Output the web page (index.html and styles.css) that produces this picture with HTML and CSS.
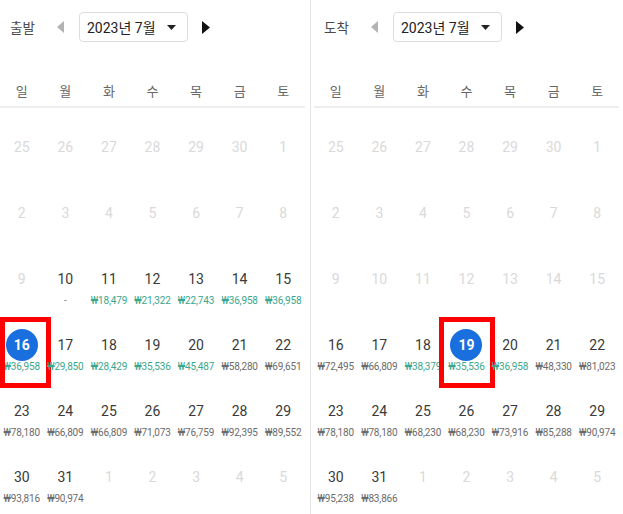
FILE: index.html
```html
<!DOCTYPE html>
<html lang="ko">
<head>
<meta charset="utf-8">
<title>달력</title>
<link rel="stylesheet" href="styles.css">
</head>
<body>
<div class="page">
  <section class="panel">
    <div class="head">
      <span class="label">출발</span>
      <div class="nav prev"><svg width="7" height="12" viewBox="0 0 7 12"><path d="M7 0 L0 6 L7 12 Z" fill="#b3b3b3"/></svg></div>
      <div class="select"><span>2023년 7월</span><svg width="9" height="5" viewBox="0 0 9 5"><path d="M0 0 H9 L4.5 5 Z" fill="#222"/></svg></div>
      <div class="nav next"><svg width="8" height="13" viewBox="0 0 8 13"><path d="M0 0 L8 6.5 L0 13 Z" fill="#111"/></svg></div>
    </div>
    <div class="weekdays"><span>일</span><span>월</span><span>화</span><span>수</span><span>목</span><span>금</span><span>토</span></div>
    <div class="grid">
      <div class="cell off"><span class="num">25</span></div>
      <div class="cell off"><span class="num">26</span></div>
      <div class="cell off"><span class="num">27</span></div>
      <div class="cell off"><span class="num">28</span></div>
      <div class="cell off"><span class="num">29</span></div>
      <div class="cell off"><span class="num">30</span></div>
      <div class="cell off"><span class="num">1</span></div>

      <div class="cell off"><span class="num">2</span></div>
      <div class="cell off"><span class="num">3</span></div>
      <div class="cell off"><span class="num">4</span></div>
      <div class="cell off"><span class="num">5</span></div>
      <div class="cell off"><span class="num">6</span></div>
      <div class="cell off"><span class="num">7</span></div>
      <div class="cell off"><span class="num">8</span></div>

      <div class="cell off"><span class="num">9</span></div>
      <div class="cell"><span class="num">10</span><span class="price dash">-</span></div>
      <div class="cell"><span class="num">11</span><span class="price low">₩18,479</span></div>
      <div class="cell"><span class="num">12</span><span class="price low">₩21,322</span></div>
      <div class="cell"><span class="num">13</span><span class="price low">₩22,743</span></div>
      <div class="cell"><span class="num">14</span><span class="price low">₩36,958</span></div>
      <div class="cell"><span class="num">15</span><span class="price low">₩36,958</span></div>

      <div class="cell"><span class="num sel">16</span><span class="price low">₩36,958</span><span class="mark mark-left"></span></div>
      <div class="cell"><span class="num">17</span><span class="price low">₩29,850</span></div>
      <div class="cell"><span class="num">18</span><span class="price low">₩28,429</span></div>
      <div class="cell"><span class="num">19</span><span class="price low">₩35,536</span></div>
      <div class="cell"><span class="num">20</span><span class="price low">₩45,487</span></div>
      <div class="cell"><span class="num">21</span><span class="price">₩58,280</span></div>
      <div class="cell"><span class="num">22</span><span class="price">₩69,651</span></div>

      <div class="cell"><span class="num">23</span><span class="price">₩78,180</span></div>
      <div class="cell"><span class="num">24</span><span class="price">₩66,809</span></div>
      <div class="cell"><span class="num">25</span><span class="price">₩66,809</span></div>
      <div class="cell"><span class="num">26</span><span class="price">₩71,073</span></div>
      <div class="cell"><span class="num">27</span><span class="price">₩76,759</span></div>
      <div class="cell"><span class="num">28</span><span class="price">₩92,395</span></div>
      <div class="cell"><span class="num">29</span><span class="price">₩89,552</span></div>

      <div class="cell"><span class="num">30</span><span class="price">₩93,816</span></div>
      <div class="cell"><span class="num">31</span><span class="price">₩90,974</span></div>
      <div class="cell off"><span class="num">1</span></div>
      <div class="cell off"><span class="num">2</span></div>
      <div class="cell off"><span class="num">3</span></div>
      <div class="cell off"><span class="num">4</span></div>
      <div class="cell off"><span class="num">5</span></div>
    </div>
  </section>

  <div class="divider"></div>

  <section class="panel">
    <div class="head">
      <span class="label">도착</span>
      <div class="nav prev"><svg width="7" height="12" viewBox="0 0 7 12"><path d="M7 0 L0 6 L7 12 Z" fill="#b3b3b3"/></svg></div>
      <div class="select"><span>2023년 7월</span><svg width="9" height="5" viewBox="0 0 9 5"><path d="M0 0 H9 L4.5 5 Z" fill="#222"/></svg></div>
      <div class="nav next"><svg width="8" height="13" viewBox="0 0 8 13"><path d="M0 0 L8 6.5 L0 13 Z" fill="#111"/></svg></div>
    </div>
    <div class="weekdays"><span>일</span><span>월</span><span>화</span><span>수</span><span>목</span><span>금</span><span>토</span></div>
    <div class="grid">
      <div class="cell off"><span class="num">25</span></div>
      <div class="cell off"><span class="num">26</span></div>
      <div class="cell off"><span class="num">27</span></div>
      <div class="cell off"><span class="num">28</span></div>
      <div class="cell off"><span class="num">29</span></div>
      <div class="cell off"><span class="num">30</span></div>
      <div class="cell off"><span class="num">1</span></div>

      <div class="cell off"><span class="num">2</span></div>
      <div class="cell off"><span class="num">3</span></div>
      <div class="cell off"><span class="num">4</span></div>
      <div class="cell off"><span class="num">5</span></div>
      <div class="cell off"><span class="num">6</span></div>
      <div class="cell off"><span class="num">7</span></div>
      <div class="cell off"><span class="num">8</span></div>

      <div class="cell off"><span class="num">9</span></div>
      <div class="cell off"><span class="num">10</span></div>
      <div class="cell off"><span class="num">11</span></div>
      <div class="cell off"><span class="num">12</span></div>
      <div class="cell off"><span class="num">13</span></div>
      <div class="cell off"><span class="num">14</span></div>
      <div class="cell off"><span class="num">15</span></div>

      <div class="cell"><span class="num">16</span><span class="price">₩72,495</span></div>
      <div class="cell"><span class="num">17</span><span class="price">₩66,809</span></div>
      <div class="cell"><span class="num">18</span><span class="price low">₩38,379</span></div>
      <div class="cell"><span class="num sel">19</span><span class="price low">₩35,536</span><span class="mark mark-right"></span></div>
      <div class="cell"><span class="num">20</span><span class="price low">₩36,958</span></div>
      <div class="cell"><span class="num">21</span><span class="price">₩48,330</span></div>
      <div class="cell"><span class="num">22</span><span class="price">₩81,023</span></div>

      <div class="cell"><span class="num">23</span><span class="price">₩78,180</span></div>
      <div class="cell"><span class="num">24</span><span class="price">₩78,180</span></div>
      <div class="cell"><span class="num">25</span><span class="price">₩68,230</span></div>
      <div class="cell"><span class="num">26</span><span class="price">₩68,230</span></div>
      <div class="cell"><span class="num">27</span><span class="price">₩73,916</span></div>
      <div class="cell"><span class="num">28</span><span class="price">₩85,288</span></div>
      <div class="cell"><span class="num">29</span><span class="price">₩90,974</span></div>

      <div class="cell"><span class="num">30</span><span class="price">₩95,238</span></div>
      <div class="cell"><span class="num">31</span><span class="price">₩83,866</span></div>
      <div class="cell off"><span class="num">1</span></div>
      <div class="cell off"><span class="num">2</span></div>
      <div class="cell off"><span class="num">3</span></div>
      <div class="cell off"><span class="num">4</span></div>
      <div class="cell off"><span class="num">5</span></div>
    </div>
  </section>
</div>
</body>
</html>
```

FILE: styles.css
```css
html, body {
  margin: 0;
  padding: 0;
  background: #ffffff;
}

body {
  font-family: Roboto, "Noto Sans CJK KR", sans-serif;
  color: #333333;
}

.page {
  display: flex;
  height: 514px;
  overflow: hidden;
}

.panel {
  width: 305px;
  flex: none;
}

.divider {
  width: 1px;
  flex: none;
  background: #e6e6e6;
  margin: 0 3px 0 5px;
}

.head {
  display: flex;
  align-items: center;
  height: 30px;
  margin-top: 12px;
  padding-left: 10px;
}

.label {
  width: 27px;
  font-family: "Noto Sans CJK KR", sans-serif;
  font-size: 13.5px;
  font-weight: 400;
  color: #4a4a4a;
  white-space: nowrap;
}

.nav {
  display: flex;
  align-items: center;
}

.nav.prev {
  margin-left: 20px;
}

.nav.next {
  margin-left: 14px;
}

.select {
  margin-left: 15px;
  width: 109px;
  height: 30px;
  box-sizing: border-box;
  border: 1px solid #dddddd;
  border-radius: 4px;
  display: flex;
  align-items: center;
  justify-content: space-between;
  padding: 0 11px 0 7px;
  font-size: 14px;
  color: #222222;
}

.weekdays {
  display: grid;
  grid-template-columns: repeat(7, 1fr);
  align-items: center;
  height: 32px;
  margin-top: 32px;
  border-bottom: 2px solid #eeeeee;
  font-family: "Noto Sans CJK KR", sans-serif;
  font-size: 13px;
  font-weight: 400;
  color: #666666;
  text-align: center;
}

.grid {
  display: grid;
  grid-template-columns: repeat(7, 1fr);
  margin-top: 6px;
}

.cell {
  position: relative;
  height: 66px;
  box-sizing: border-box;
  padding-top: 21px;
  display: flex;
  flex-direction: column;
  align-items: center;
}

.num {
  line-height: 24px;
  font-size: 14px;
  color: #3a3a3a;
}

.cell.off .num {
  color: #d9d9d9;
}

.num.sel {
  width: 32px;
  height: 32px;
  margin: -4px 0;
  border-radius: 50%;
  background: #1a6fdf;
  color: #ffffff;
  font-weight: 700;
  display: flex;
  align-items: center;
  justify-content: center;
}

.price {
  line-height: 20px;
  font-size: 10px;
  letter-spacing: -0.15px;
  color: #6b6b6b;
  white-space: nowrap;
}

.price.low {
  color: #3aa68d;
}

.price.dash {
  color: #888888;
}

.mark {
  position: absolute;
  top: 5px;
  height: 71px;
  box-sizing: border-box;
  border: 5px solid #ff0000;
}

.mark-left {
  left: 0;
  width: 51px;
}

.mark-right {
  left: -6px;
  width: 56px;
}
```
